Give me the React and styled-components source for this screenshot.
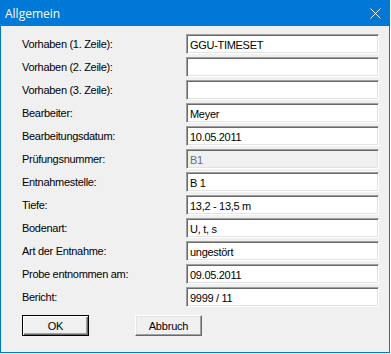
import React from "react";
import styled, { createGlobalStyle } from "styled-components";

const Global = createGlobalStyle`
  html, body { margin: 0; padding: 0; background: #ffffff; }
  #root { width: 391px; height: 354px; }
`;

const Window = styled.div`
  box-sizing: border-box;
  width: 390px;
  height: 353px;
  border: 1px solid #0078d7;
  border-top: none;
  background: #f0f0f0;
  display: flex;
  flex-direction: column;
  font-family: "Liberation Sans", Arial, sans-serif;
`;

const TitleBar = styled.div`
  height: 26px;
  margin: 0 -1px;
  background: #0078d7;
  display: flex;
  align-items: center;
  justify-content: space-between;
  padding: 0 9px 0 5px;
  flex-shrink: 0;
`;

const Title = styled.span`
  font-family: "Segoe UI", "Open Sans", "Noto Sans", sans-serif;
  font-size: 12px;
  color: #ffffff;
  line-height: 16px;
  margin-top: 1px;
`;

const CloseIcon = styled.svg`
  width: 11px;
  height: 11px;
  margin-top: 1px;
  display: block;
`;

const Body = styled.div`
  padding: 8px 0 0 21px;
  display: flex;
  flex-direction: column;
`;

const Form = styled.div`
  display: grid;
  grid-template-columns: 164px 193px;
  grid-auto-rows: 20px;
  row-gap: 3px;
`;

const Label = styled.div`
  font-size: 11px;
  letter-spacing: -0.3px;
  color: #000000;
  display: flex;
  align-items: center;
  white-space: nowrap;
`;

const Field = styled.div`
  box-sizing: border-box;
  height: 20px;
  border-style: solid;
  border-width: 1px;
  border-color: #a0a0a0 #ffffff #ffffff #a0a0a0;
  box-shadow: inset 1px 1px 0 #696969, inset -1px -1px 0 #e3e3e3;
  background: ${(p) => (p.$disabled ? "#f0f0f0" : "#ffffff")};
  color: ${(p) => (p.$disabled ? "#6d6d6d" : "#000000")};
  font-size: 11px;
  letter-spacing: -0.3px;
  padding: 2px 0 0 3px;
  line-height: 16px;
  white-space: nowrap;
  overflow: hidden;
`;

const ButtonRow = styled.div`
  display: flex;
  gap: 46px;
  margin-top: 8px;
  padding-left: 0;
`;

const Button = styled.div`
  box-sizing: border-box;
  width: 67px;
  height: 21px;
  background: #f0f0f0;
  border-style: solid;
  border-width: 1px;
  border-color: ${(p) =>
    p.$default ? "#000000" : "#ffffff #696969 #696969 #ffffff"};
  box-shadow: ${(p) =>
    p.$default
      ? "inset 1px 1px 0 #ffffff, inset -1px -1px 0 #696969, inset -2px -2px 0 #a0a0a0"
      : "inset -1px -1px 0 #a0a0a0, inset 1px 1px 0 #e3e3e3"};
  display: flex;
  align-items: center;
  justify-content: center;
  font-size: 11px;
  letter-spacing: -0.2px;
  color: #000000;
  padding-top: 1px;
`;

const rows = [
  ["Vorhaben (1. Zeile):", "GGU-TIMESET"],
  ["Vorhaben (2. Zeile):", ""],
  ["Vorhaben (3. Zeile):", ""],
  ["Bearbeiter:", "Meyer"],
  ["Bearbeitungsdatum:", "10.05.2011"],
  ["Prüfungsnummer:", "B1", true],
  ["Entnahmestelle:", "B 1"],
  ["Tiefe:", "13,2 - 13,5 m"],
  ["Bodenart:", "U, t, s"],
  ["Art der Entnahme:", "ungestört"],
  ["Probe entnommen am:", "09.05.2011"],
  ["Bericht:", "9999 / 11"],
];

export default function App() {
  return (
    <>
      <Global />
      <Window>
        <TitleBar>
          <Title>Allgemein</Title>
          <CloseIcon viewBox="0 0 11 11">
            <path d="M0.5 0.5 L10.5 10.5 M10.5 0.5 L0.5 10.5" stroke="#ffffff" strokeWidth="1" fill="none" />
          </CloseIcon>
        </TitleBar>
        <Body>
          <Form>
            {rows.map(([label, value, disabled]) => (
              <React.Fragment key={label}>
                <Label>{label}</Label>
                <Field $disabled={disabled}>{value}</Field>
              </React.Fragment>
            ))}
          </Form>
          <ButtonRow>
            <Button $default>OK</Button>
            <Button>Abbruch</Button>
          </ButtonRow>
        </Body>
      </Window>
    </>
  );
}
